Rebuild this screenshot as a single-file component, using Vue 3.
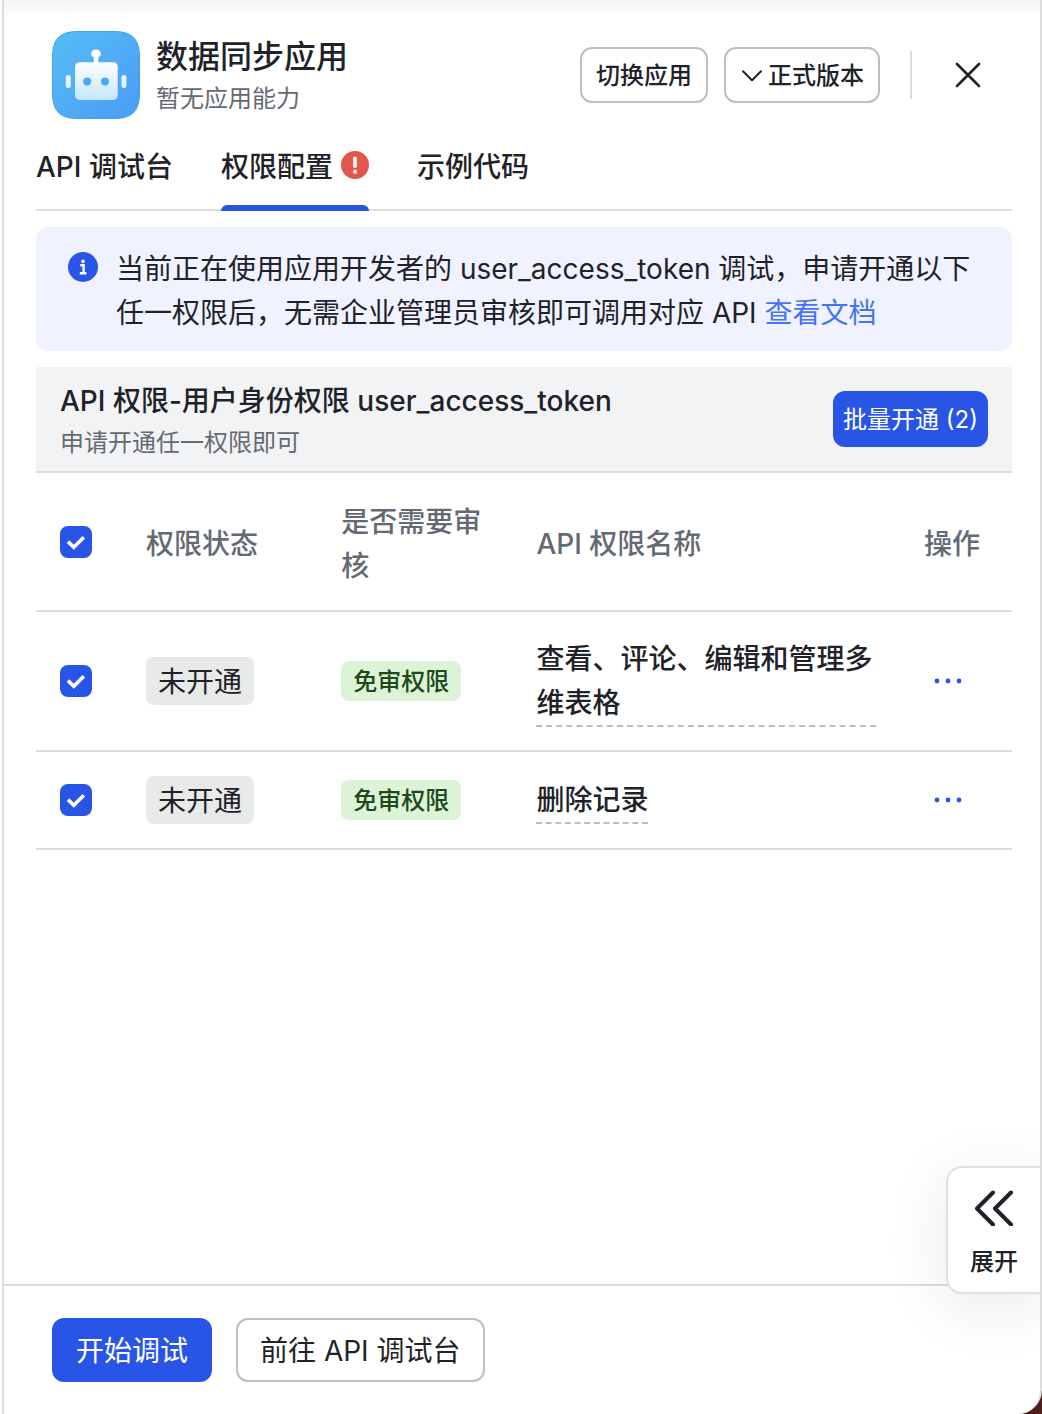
<script setup>
import { ref, computed } from 'vue'

const tabs = [
  { id: 'console', label: 'API 调试台' },
  { id: 'permission', label: '权限配置', alert: true },
  { id: 'sample', label: '示例代码' },
]
const activeTab = ref('permission')
const version = ref('release')

const permissions = ref([
  { id: 1, name: '查看、评论、编辑和管理多维表格', status: '未开通', review: '免审权限', checked: true },
  { id: 2, name: '删除记录', status: '未开通', review: '免审权限', checked: true },
])

const checkedCount = computed(() => permissions.value.filter((p) => p.checked).length)
const allChecked = computed({
  get: () => checkedCount.value === permissions.value.length,
  set: (value) => permissions.value.forEach((p) => { p.checked = value }),
})
</script>

<template>
  <div class="panel">
    <header class="app-header">
      <svg class="app-logo" viewBox="0 0 88 88" aria-hidden="true">
        <defs>
          <linearGradient id="logo-bg" x1="0" y1="0" x2="1" y2="1">
            <stop offset="0" stop-color="#55bef6" />
            <stop offset="1" stop-color="#4a9bf5" />
          </linearGradient>
          <linearGradient id="logo-head" x1="0" y1="0" x2="0" y2="1">
            <stop offset="0" stop-color="#ffffff" />
            <stop offset="1" stop-color="#c3e6fc" />
          </linearGradient>
        </defs>
        <path d="M26 .5H62C80 .5 87.5 8 87.5 26V62C87.5 80 80 87.5 62 87.5H26C8 87.5 .5 80 .5 62V26C.5 8 8 .5 26 .5Z" fill="url(#logo-bg)" stroke="#469fdf" />
        <ellipse cx="44" cy="22.6" rx="5" ry="4" fill="#fff" />
        <rect x="41.8" y="24" width="4.6" height="9" fill="#fff" />
        <rect x="23" y="31.3" width="42.7" height="37.6" rx="4.5" fill="url(#logo-head)" />
        <circle cx="35.2" cy="50.4" r="4" fill="#4aa9f6" />
        <circle cx="53" cy="50.4" r="4" fill="#4aa9f6" />
        <rect x="13.8" y="44" width="5" height="13" rx="2.2" fill="#e3f4fe" />
        <rect x="69.4" y="44" width="5" height="13" rx="2.2" fill="#e3f4fe" />
      </svg>
      <div class="app-info">
        <h1>数据同步应用</h1>
        <p>暂无应用能力</p>
      </div>
      <div class="app-actions">
        <button class="btn btn-small" type="button">切换应用</button>
        <label class="version">
          <svg viewBox="0 0 20 12" aria-hidden="true">
            <path d="M1 1.2 10 10.2 19 1.2" fill="none" stroke="#1f2329" stroke-width="2" stroke-linecap="round" stroke-linejoin="round" />
          </svg>
          <select v-model="version" class="btn btn-small" aria-label="版本">
            <option value="release">正式版本</option>
          </select>
        </label>
        <span class="divider"></span>
        <button class="close" type="button" aria-label="关闭">
          <svg viewBox="0 0 26 26" aria-hidden="true">
            <path d="M2 2 24 24M24 2 2 24" stroke="#1f2329" stroke-width="2.6" stroke-linecap="round" />
          </svg>
        </button>
      </div>
    </header>

    <main class="content">
      <nav class="tabs" role="tablist">
        <button
          v-for="tab in tabs"
          :key="tab.id"
          class="tab"
          :class="{ active: tab.id === activeTab }"
          type="button"
          role="tab"
          :aria-selected="tab.id === activeTab"
          @click="activeTab = tab.id"
        >
          {{ tab.label }}
          <svg v-if="tab.alert" class="alert" viewBox="0 0 28 28" aria-hidden="true">
            <circle cx="14" cy="14" r="14" fill="#e2574c" />
            <rect x="12.2" y="5.8" width="3.6" height="11" rx="1" fill="#fff" />
            <rect x="12.2" y="18.8" width="3.6" height="3.8" rx="1.2" fill="#fff" />
          </svg>
        </button>
      </nav>

      <section class="notice">
        <svg class="info" viewBox="0 0 30 30" aria-hidden="true">
          <circle cx="15" cy="15" r="15" fill="#2955e7" />
          <circle cx="15" cy="9.4" r="1.8" fill="#fff" />
          <path d="M12.2 13.2H15.6V21M11.8 21.2H18.4" fill="none" stroke="#fff" stroke-width="2.4" />
        </svg>
        <p>
          当前正在使用应用开发者的 user_access_token 调试，申请开通以下任一权限后，无需企业管理员审核即可调用对应 API
          <a href="#">查看文档</a>
        </p>
      </section>

      <section class="scope">
        <div class="scope-head">
          <div>
            <h2>API 权限-用户身份权限 user_access_token</h2>
            <p>申请开通任一权限即可</p>
          </div>
          <button class="btn btn-small btn-primary btn-batch" type="button">批量开通 ({{ checkedCount }})</button>
        </div>

        <table>
          <colgroup>
            <col class="col-check" />
            <col class="col-fifth" />
            <col class="col-fifth" />
            <col />
            <col class="col-action" />
          </colgroup>
          <thead>
            <tr>
              <th class="cell-check">
                <label class="check">
                  <input v-model="allChecked" type="checkbox" aria-label="全选" />
                  <svg viewBox="0 0 32 32" aria-hidden="true"><path d="M8 15.6 13.8 21.2 23.8 11.2" /></svg>
                </label>
              </th>
              <th>权限状态</th>
              <th>是否需要审核</th>
              <th>API 权限名称</th>
              <th>操作</th>
            </tr>
          </thead>
          <tbody>
            <tr v-for="item in permissions" :key="item.id">
              <td>
                <label class="check">
                  <input v-model="item.checked" type="checkbox" :aria-label="item.name" />
                  <svg viewBox="0 0 32 32" aria-hidden="true"><path d="M8 15.6 13.8 21.2 23.8 11.2" /></svg>
                </label>
              </td>
              <td><span class="tag">{{ item.status }}</span></td>
              <td><span class="tag tag-green">{{ item.review }}</span></td>
              <td class="cell-name"><span class="name">{{ item.name }}</span></td>
              <td>
                <button class="more" type="button" aria-label="更多操作">
                  <svg viewBox="0 0 28 6" aria-hidden="true">
                    <circle cx="3" cy="3" r="2.4" />
                    <circle cx="14" cy="3" r="2.4" />
                    <circle cx="25" cy="3" r="2.4" />
                  </svg>
                </button>
              </td>
            </tr>
          </tbody>
        </table>
      </section>
    </main>

    <footer class="footer">
      <button class="btn btn-primary" type="button">开始调试</button>
      <button class="btn" type="button">前往 API 调试台</button>
    </footer>

    <button class="expand" type="button">
      <svg viewBox="0 0 40 36" aria-hidden="true">
        <path d="M19 2.5 3 18.5 19 34.5M37 2.5 21 18.5 37 34.5" fill="none" stroke="#1f2329" stroke-width="4" stroke-linecap="round" stroke-linejoin="round" />
      </svg>
      展开
    </button>
  </div>
</template>

<style>
body {
  background: linear-gradient(90deg, #fff 50%, #4d1f1a 50%);
}
</style>

<style scoped>
.panel,
.panel * {
  box-sizing: border-box;
}

.panel {
  position: relative;
  display: flex;
  flex-direction: column;
  min-height: 100vh;
  overflow: hidden;
  border-right: 2px solid #dcdddf;
  border-bottom-right-radius: 24px;
  background: linear-gradient(#f4f4f4, #fff 16px) #fff;
  box-shadow: inset 2px 0 #fff, inset 4px 0 #dcdddf;
  color: #1f2329;
  font-family: Inter, "Noto Sans CJK SC", sans-serif;
  font-size: 28px;
  line-height: 44px;
}

h1,
h2,
p {
  margin: 0;
}

button,
select {
  font: inherit;
  color: inherit;
  cursor: pointer;
}

.app-header {
  display: flex;
  align-items: center;
  gap: 16px;
  padding: 31px 44px 0 52px;
}

.app-logo {
  flex: none;
  width: 88px;
  height: 88px;
}

.app-info {
  flex: 1;
  padding-top: 4px;
  margin-bottom: -4px;
}

.app-info {
  margin-bottom: 0;
}

.app-info h1 {
  font-size: 32px;
  font-weight: 500;
  line-height: 44px;
}

.app-info p,
.scope-head p {
  color: #646a73;
  font-size: 24px;
  line-height: 40px;
}

.app-actions {
  display: flex;
  align-items: center;
  gap: 16px;
}

.btn {
  height: 64px;
  padding: 2px 22px 0;
  border: 2px solid #bbbfc4;
  border-radius: 12px;
  background: #fff;
  white-space: nowrap;
}

.btn-small {
  height: 56px;
  padding: 2px 14px 0;
  font-size: 24px;
  font-weight: 500;
}

.btn-primary {
  border-color: #2955e7;
  background: #2955e7;
  color: #fff;
}

.btn-batch {
  padding: 2px 8px 0;
  font-weight: 400;
}

.version {
  position: relative;
}

.version select {
  display: block;
  appearance: none;
  padding-left: 42px;
}

.version svg {
  position: absolute;
  top: 23px;
  left: 18px;
  width: 20px;
  height: 12px;
  pointer-events: none;
}

.divider {
  width: 2px;
  height: 48px;
  margin: 0 12px 0 14px;
  background: #dcdddf;
}

.close {
  display: flex;
  padding: 15px;
  border: 0;
  background: none;
}

.close svg {
  width: 26px;
  height: 26px;
}

.content {
  flex: 1;
  padding: 26px 28px 0 36px;
}

.tabs {
  display: flex;
  gap: 48px;
  height: 66px;
  border-bottom: 2px solid #dcdddf;
}

.tab {
  position: relative;
  display: flex;
  align-items: flex-start;
  gap: 8px;
  padding: 0;
  border: 0;
  background: none;
  font-weight: 500;
}

.tab.active::after {
  content: "";
  position: absolute;
  right: 0;
  bottom: -2px;
  left: 0;
  height: 6px;
  border-radius: 6px 6px 0 0;
  background: #2955e7;
}

.alert {
  width: 28px;
  height: 28px;
  margin-top: 6px;
}

.notice {
  display: flex;
  align-items: flex-start;
  gap: 18px;
  margin: 16px 0;
  padding: 20px 32px 16px;
  border-radius: 12px;
  background: #f0f3ff;
}

.notice p {
  flex: 1;
}

.info {
  flex: none;
  width: 30px;
  height: 30px;
  margin-top: 5px;
}

a {
  color: #4573f5;
  text-decoration: none;
}

.scope-head {
  display: flex;
  align-items: center;
  justify-content: space-between;
  height: 106px;
  padding: 0 24px;
  border-bottom: 2px solid #dcdddf;
  background: #f2f3f5;
}

.scope-head > div {
  padding-top: 3px;
}

.scope-head h2 {
  font-size: 28px;
  font-weight: 500;
  line-height: 44px;
}

table {
  width: 100%;
  border-collapse: separate;
  border-spacing: 0;
  table-layout: fixed;
}

.col-check {
  width: 86px;
}

.col-fifth {
  width: 20%;
}

.col-action {
  width: 112px;
}

th,
td {
  padding: 24px;
  border-bottom: 2px solid #dcdddf;
  text-align: left;
  vertical-align: middle;
}

th {
  padding: 27px 24px 22px;
  color: #646a73;
  font-weight: 500;
}

th.cell-check {
  padding: 24px;
}

.cell-name {
  padding-top: 25px;
  padding-bottom: 23px;
}

.check {
  position: relative;
  display: block;
  width: 32px;
  height: 32px;
}

.check input {
  display: block;
  appearance: none;
  width: 32px;
  height: 32px;
  margin: 0;
  border: 2px solid #8f959e;
  border-radius: 8px;
}

.check input:checked {
  border-color: #2955e7;
  background: #2955e7;
}

.check svg {
  position: absolute;
  inset: 0;
  fill: none;
  stroke: #fff;
  stroke-width: 3.6;
  pointer-events: none;
}

.tag {
  display: block;
  width: fit-content;
  padding: 3px 12px 1px;
  border-radius: 8px;
  background: #e8eaea;
  white-space: nowrap;
}

.tag-green {
  padding: 2px 12px 0;
  background: #dcf3d7;
  color: #20491a;
  font-size: 24px;
  font-weight: 500;
  line-height: 38px;
}

.name {
  display: block;
  width: fit-content;
  border-bottom: 2px dashed #bbbfc4;
  font-weight: 500;
}

.more {
  display: flex;
  margin-left: 8px;
  padding: 12px 2px;
  border: 0;
  background: none;
}

.more svg {
  width: 28px;
  height: 6px;
  fill: #2955e7;
}

.footer {
  display: flex;
  gap: 24px;
  margin-left: 4px;
  padding: 32px 48px;
  border-top: 2px solid #dcdddf;
}

.expand {
  position: absolute;
  right: -2px;
  bottom: 120px;
  display: flex;
  flex-direction: column;
  align-items: center;
  gap: 16px;
  width: 96px;
  padding: 22px 2px 10px 0;
  border: 2px solid #dee0e6;
  border-right: 0;
  border-radius: 16px 0 0 16px;
  background: #fff;
  box-shadow: 0 12px 60px rgba(31, 35, 41, 0.1);
  font-size: 24px;
  font-weight: 500;
  line-height: 40px;
}

.expand svg {
  width: 40px;
  height: 36px;
}
</style>
